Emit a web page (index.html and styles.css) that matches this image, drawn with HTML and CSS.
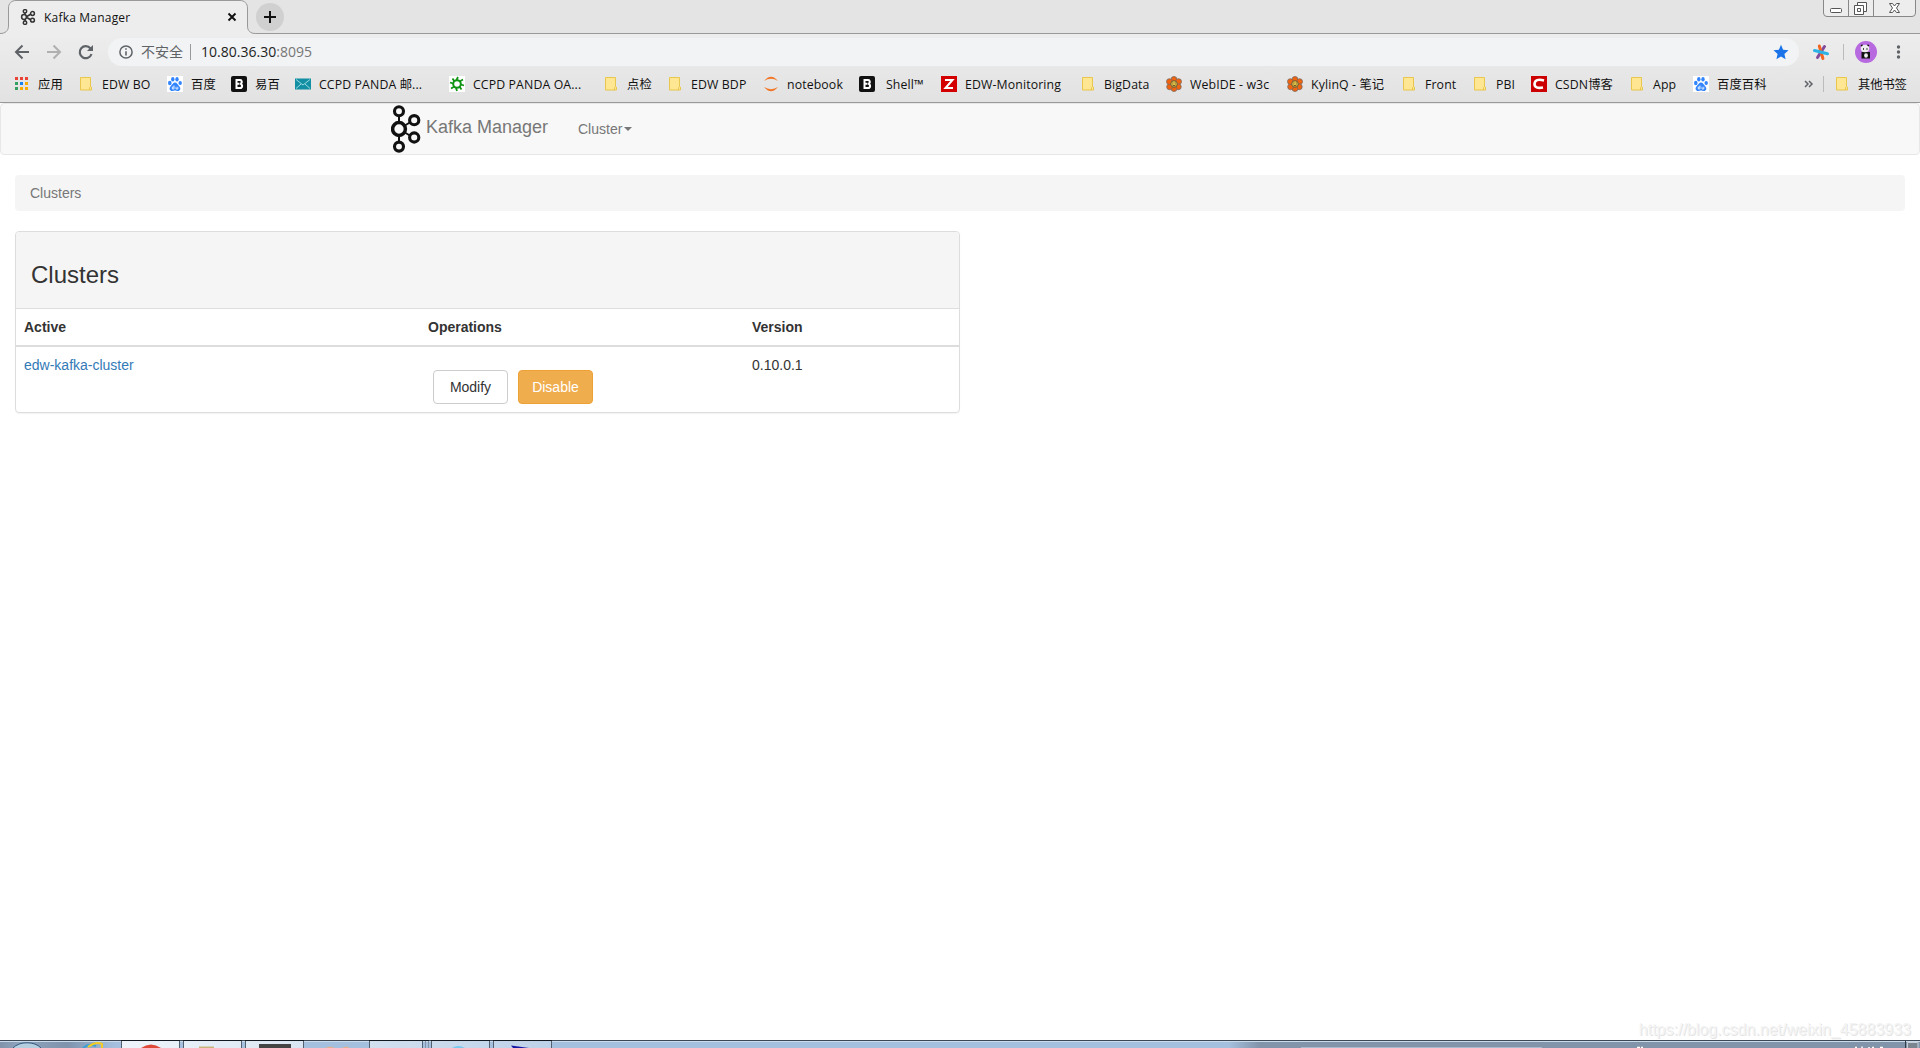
FILE: index.html
```html
<!DOCTYPE html>
<html lang="zh-CN">
<head>
<meta charset="utf-8">
<title>Kafka Manager</title>
<link rel="stylesheet" href="styles.css">
</head>
<body>
<svg class="defs" aria-hidden="true">
  <symbol id="kafka" viewBox="0 0 30 48"><g fill="none" stroke="currentColor"><path d="M8 11v26M8 24l15-9M8 24l15 9" stroke-width="2"/><g fill="#f8f8f8" stroke-width="3.1"><circle cx="8" cy="6.3" r="4.5"/><circle cx="8" cy="24" r="6.4" stroke-width="3.5"/><circle cx="8" cy="41.6" r="4.5"/><circle cx="23.2" cy="15.2" r="4.6"/><circle cx="23.2" cy="32.5" r="4.6"/></g></g></symbol>
  <symbol id="folder" viewBox="0 0 16 16"><path d="M2.500 1.500h10v9.200l1 .5v2.800h-11z" fill="#ffe692" stroke="#e9c64d"/><path d="M11.500 14v-2.500l1-1" fill="none" stroke="#e9c64d"/></symbol>
  <symbol id="baidu" viewBox="0 0 16 16"><path fill="#fff" d="M0 0h16v16H0z"/><g fill="#3385ff"><ellipse cx="2.800" cy="7" rx="1.800" ry="2.200"/><ellipse cx="5.800" cy="3.200" rx="1.700" ry="2.300"/><ellipse cx="10" cy="3.200" rx="1.700" ry="2.300"/><ellipse cx="13.200" cy="7" rx="1.700" ry="2.100"/><path d="M8 6.500c2 0 2.600 2 4 3.500 2.500 2.500 1 5-1 5-1.500 0-2-.5-3-.5s-1.500.5-3 .5c-2 0-3.600-2.500-1.200-5C5.500 8.500 6 6.500 8 6.500z"/></g><path d="M7 9.500v3.500H5.300v-2H7m2-.2v2.200h1.800v-2.200" fill="none" stroke="#fff" stroke-width=".8"/></symbol>
  <symbol id="boot" viewBox="0 0 16 16"><rect width="16" height="16" rx="2" fill="#111"/><path d="M5.500 4v8h3.300a2 2 0 0 0 .4-4.200A1.900 1.900 0 0 0 8.600 4zM5.500 7.800h3" fill="none" stroke="#fff" stroke-width="2"/></symbol>
  <symbol id="flower" viewBox="0 0 16 16"><g fill="#f26310" stroke="#7a6a60" stroke-width=".8"><circle cx="8" cy="3.400" r="2.900"/><circle cx="12.600" cy="5.600" r="2.900"/><circle cx="12.300" cy="10.800" r="2.900"/><circle cx="8" cy="12.600" r="2.900"/><circle cx="3.600" cy="10.800" r="2.900"/><circle cx="3.400" cy="5.600" r="2.900"/></g><circle cx="8" cy="8" r="3.300" fill="#e1c14a" stroke="#6d5a30"/><path d="M6.500 7h.8m1.600 0h.8M6.500 9l1.500 1 1.500-1" fill="none" stroke="#59461c"/></symbol>
</svg>

<header class="browser">
  <div class="tabstrip">
    <svg class="tab-shape" width="256" height="35" viewBox="0 0 256 35"><path d="M0 34V33.500C5 33.500 8.500 31 8.500 26V8C8.500 3.500 11.500.5 16 .5h224c4.500 0 7.500 3 7.500 7.500v18c0 5 3 7.500 8 7.500V35H0z" fill="#ededed"/><path d="M0 33.500C5 33.500 8.500 31 8.500 26V8C8.500 3.500 11.500.5 16 .5h224c4.500 0 7.500 3 7.500 7.500v18c0 5 3 7.500 8 7.500" fill="none" stroke="#999"/></svg>
    <div class="tab">
      <svg class="tab-icon" viewBox="0 0 16 16"><g fill="none" stroke="#333" stroke-width="1.500"><path d="M5 4v8M6 8l5-3M6 8l5 3"/><g fill="#ededed"><circle cx="5" cy="2.300" r="1.700"/><circle cx="4" cy="8" r="2.400"/><circle cx="5" cy="13.700" r="1.700"/><circle cx="12.500" cy="4.500" r="1.900"/><circle cx="12.500" cy="11.200" r="1.900"/></g></g></svg>
      <span class="tab-title">Kafka Manager</span>
      <svg class="tab-close" viewBox="0 0 10 10"><path d="M1.500 1.500l7 7m0-7l-7 7" stroke="#111" stroke-width="1.900"/></svg>
    </div>
    <span class="newtab"><svg width="28" height="28" viewBox="0 0 28 28"><path d="M14 8v12M8 14h12" stroke="#111" stroke-width="2"/></svg></span>
    <svg class="winctl" width="94" height="18" viewBox="0 0 94 18"><path d="M.5 0v13q0 3.500 3.500 3.500h85q3.500 0 3.500-3.500V0M25.500 0v16M50.500 0v16" fill="#ededed" stroke="#888"/><rect x="7.500" y="8.500" width="11" height="4" rx="1" fill="#fff" stroke="#555"/><path d="M34.500 5.500v-3h9v9h-3" fill="#fff" stroke="#555"/><path d="M31.500 5.500h9v9h-9zM34.500 8.500h3v3h-3z" fill="#fff" stroke="#555"/><path d="M66.500 3.500h3l2 2.500 2-2.500h3l-3 4.500 3 4.500h-3l-2-2.500-2 2.500h-3l3-4.500z" fill="#fff" stroke="#555"/></svg>
  </div>

  <div class="toolbar">
    <svg class="nav-icons" width="108" height="28" viewBox="0 0 108 28"><g fill="none" stroke-width="2"><path d="M29 14H16.500M22.500 7.500L16 14l6.500 6.500" stroke="#5f6368"/><path d="M47 14h12.500M53.500 7.500L60 14l-6.500 6.500" stroke="#b0b0b0"/><path d="M90.500 10.500A6 6 0 1 0 91.500 16" stroke="#5f6368" stroke-width="2.200"/></g><path d="M93 7v6h-6z" fill="#5f6368"/></svg>
    <div class="omnibox">
      <svg width="14" height="14" viewBox="0 0 14 14"><circle cx="7" cy="7" r="6.100" fill="none" stroke="#5f6368" stroke-width="1.500"/><path d="M7 6.200v4.300M7 3.300v1.500" stroke="#5f6368" stroke-width="1.600"/></svg>
      <span class="insecure">不安全</span>
      <span class="url"><b>10.80.36.30</b>:8095</span>
      <svg class="star" width="16" height="16" viewBox="0 0 16 16"><path d="M8 .8l2.100 5 5.400.5-4.100 3.600 1.200 5.300L8 12.400l-4.600 2.800 1.200-5.300L.5 6.300l5.400-.5z" fill="#1a73e8"/></svg>
    </div>
    <svg class="tools" width="113" height="28" viewBox="0 0 113 28"><g stroke-width="3" stroke-linecap="round"><path d="M17.500 8.500l-7 11" stroke="#824b9e"/><path d="M12.300 8l3.600 12.500" stroke="#f26422"/><path d="M7.500 12.500l13 3.300" stroke="#2bb2e6"/></g><path d="M36.500 6v16" stroke="#bbb"/><circle cx="59" cy="14" r="11" fill="#b76ae0"/><path d="M54.500 14h8.500v6.500h-8.500z" fill="#111"/><ellipse cx="58" cy="10.500" rx="4.300" ry="3.700" fill="#eee"/><ellipse cx="59" cy="17.500" rx="1.900" ry="2.300" fill="#eee"/><path d="M54 8l1.500-1.200M60.500 6.800L62 8M56 11h1m2.500 0h1" stroke="#111" stroke-width="1.400"/><g fill="#5f6368"><circle cx="91.500" cy="9" r="1.700"/><circle cx="91.500" cy="14" r="1.700"/><circle cx="91.500" cy="19" r="1.700"/></g></svg>
  </div>

  <nav class="bookmarks">
    <a><svg viewBox="0 0 16 16"><g transform="translate(1 1)"><path fill="#ea4335" d="M0 0h3v3H0zM5 0h3v3H5zM10 0h3v3h-3z"/><path fill="#34a060" d="M0 5h3v3H0zM0 10h3v3H0z"/><path fill="#1a82f0" d="M5 5h3v3H5z"/><path fill="#f9ab00" d="M10 5h3v3h-3zM5 10h3v3H5zM10 10h3v3h-3z"/></g></svg><span>应用</span></a>
    <a><svg><use href="#folder"/></svg><span>EDW BO</span></a>
    <a><svg><use href="#baidu"/></svg><span>百度</span></a>
    <a><svg><use href="#boot"/></svg><span>易百</span></a>
    <a><svg viewBox="0 0 16 16"><path d="M0 2.500h16v11H0z" fill="#138fa3"/><path d="M1 3.500l7 5.500 7-5.500M1 12.500l5-4.500m9 4.500L10 8" fill="none" stroke="#b8edf0" stroke-width=".8"/></svg><span>CCPD PANDA 邮...</span></a>
    <a><svg viewBox="0 0 16 16"><path fill="#fff" d="M0 0h16v16H0z"/><g fill="none" stroke="#119414"><circle cx="8" cy="8" r="3.800" stroke-width="2"/><path d="M9 1L7.500 4M7 12l1 3M1 6.500l3 1m8 1l3 1M3.500 2.500l2 3m5 5l2 3M2 12.500l3.500-2m5-5l3.500-2" stroke-width="1.800"/></g></svg><span>CCPD PANDA OA...</span></a>
    <a><svg><use href="#folder"/></svg><span>点检</span></a>
    <a><svg><use href="#folder"/></svg><span>EDW BDP</span></a>
    <a><svg viewBox="0 0 16 16"><path d="M1 5Q8-3.500 15 5 8 .7 1 5zM1 11q7 8.500 14 0-7 4.300-14 0z" fill="#f37726"/></svg><span>notebook</span></a>
    <a class="wide"><svg><use href="#boot"/></svg><span>Shell™</span></a>
    <a><svg viewBox="0 0 16 16"><path fill="#d40000" d="M0 0h16v16H0z"/><path d="M4 4h7.500L4.500 12H12" fill="none" stroke="#fff" stroke-width="2"/></svg><span>EDW-Monitoring</span></a>
    <a><svg><use href="#folder"/></svg><span>BigData</span></a>
    <a><svg><use href="#flower"/></svg><span>WebIDE - w3c</span></a>
    <a><svg><use href="#flower"/></svg><span>KylinQ - 笔记</span></a>
    <a><svg><use href="#folder"/></svg><span>Front</span></a>
    <a><svg><use href="#folder"/></svg><span>PBI</span></a>
    <a><svg viewBox="0 0 16 16"><path fill="#c00" d="M0 0h16v16H0z"/><path d="M13 4.500Q4 2 3.500 8q0 5 8.500 3.500" fill="none" stroke="#fff" stroke-width="2.600"/></svg><span>CSDN博客</span></a>
    <a><svg><use href="#folder"/></svg><span>App</span></a>
    <a><svg><use href="#baidu"/></svg><span>百度百科</span></a>
    <svg class="more" viewBox="0 0 10 10"><path d="M1 2l3 3-3 3m4-6l3 3-3 3" fill="none" stroke="#5f6368" stroke-width="1.500"/></svg>
    <a class="other"><svg><use href="#folder"/></svg><span>其他书签</span></a>
  </nav>
</header>

<main class="page">
  <nav class="navbar">
    <div class="container">
      <svg class="logo"><use href="#kafka"/></svg>
      <span class="brand">Kafka Manager</span>
      <a class="menu">Cluster<i class="caret"></i></a>
    </div>
  </nav>
  <div class="content">
    <div class="breadcrumb">Clusters</div>
    <section class="panel">
      <div class="panel-heading"><h3>Clusters</h3></div>
      <table>
        <thead><tr><th class="active">Active</th><th class="ops">Operations</th><th>Version</th></tr></thead>
        <tbody><tr><td><a class="link">edw-kafka-cluster</a></td><td><div class="buttons"><a class="btn">Modify</a><a class="btn warning">Disable</a></div></td><td>0.10.0.1</td></tr></tbody>
      </table>
    </section>
  </div>
  <div class="watermark">https://blog.csdn.net/weixin_45883933</div>
</main>

<footer class="taskbar">
  <svg width="1920" height="8" viewBox="0 0 1920 8">
    <defs>
      <linearGradient id="bar"><stop offset="0" stop-color="#8093aa"/><stop offset=".01" stop-color="#8fa4bd"/><stop offset=".035" stop-color="#7f93ad"/><stop offset=".06" stop-color="#a5c0de"/><stop offset=".64" stop-color="#a5c0de"/><stop offset=".656" stop-color="#8294aa"/><stop offset="1" stop-color="#8294aa"/></linearGradient>
      <linearGradient id="task"><stop offset="0" stop-color="#eef4fa"/><stop offset="1" stop-color="#bdd1e8"/></linearGradient>
    </defs>
    <path fill="url(#bar)" d="M0 0h1920v8H0z"/><path d="M0 .5h1920" stroke="#3d4854"/><path d="M0 1.500h1920" stroke="#c9dced"/>
    <path d="M13 8C19 1 35 1 41 8" fill="#b5cfe0" stroke="#31577d"/>
    <path d="M83 8q6-5 13-2" fill="none" stroke="#3ca0d8" stroke-width="2"/><path d="M88 7q8-6 14-3v4" fill="none" stroke="#f2cc23" stroke-width="2"/>
    <g fill="url(#task)" stroke="#52606f"><path d="M121.500 9V.5h58V9zM183.500 9V.5h58V9zM245.500 9V.5h58V9zM369.500 9V.5h53V9zM431.500 9V.5h58V9zM493.500 9V.5h58V9z"/></g>
    <path d="M121 .5h59m3 0h59m3 0h59m65 0h60m2 0h59m3 0h59" stroke="#111820"/>
    <path d="M425.500 1v7M428.500 1v7" stroke="#8494a6"/>
    <path d="M141 8q10-7 20 0z" fill="#df4938"/><path d="M199 6.500h15V8h-15z" fill="#c8b47b"/><path d="M259 8V4h32v4z" fill="#444"/><path d="M325 8l5-1.500L335 8zM342 8l4-1.500L350 8z" fill="#e5ae8d"/><path d="M452 8q6-4 13 0z" fill="#77c9ee"/><path d="M511 5.500l18 2.500h-16z" fill="#1717a5"/>
    <path d="M1301 7.500h241" stroke="#a8b9cb"/><path d="M1637 7.500h3m1 0h2M1855 7.500h2m5-1v1.500m7-1v1m3-.5h2m6 0h3" stroke="#fff" stroke-width="1.500"/>
    <path d="M1905.500 1v7" stroke="#303d4a"/><path d="M1907.500 9V2.500H1918V9" fill="#7b8590" stroke="#c5ced8"/>
  </svg>
</footer>
</body>
</html>
```
FILE: styles.css
```css
* { box-sizing: border-box; }
body {
  margin: 0;
  height: 1048px;
  display: flex;
  flex-direction: column;
  overflow: hidden;
  background: #fff;
  color: #333;
  font: 14px/20px "Liberation Sans", Arial, sans-serif;
}
svg { display: block; flex: none; }
.defs { position: absolute; width: 0; height: 0; }

/* Browser window */
.browser {
  height: 103px;
  flex: none;
  background: linear-gradient(#e4e4e4 0, #e4e4e4 33px, #ededed 34px, #e2e2e2 102px);
  border-bottom: 1px solid #999;
  color: #111;
  font-family: "Open Sans", "Noto Sans CJK SC", sans-serif;
}
.tabstrip {
  height: 34px;
  display: flex;
  position: relative;
  border-bottom: 1px solid #999;
}
.tab-shape { position: absolute; left: 0; top: 0; }
.tab {
  position: relative;
  width: 248px;
  height: 34px;
  padding: 0 11px 0 20px;
  display: flex;
  align-items: center;
}
.tab-icon { width: 16px; height: 16px; }
.tab-title { margin-left: 8px; padding-top: 2px; font-size: 12px; letter-spacing: .2px; }
.tab-close { width: 10px; height: 10px; margin-left: auto; }
.newtab {
  width: 28px;
  height: 28px;
  margin: 3px 0 0 8px;
  border-radius: 50%;
  background: #d0d0d0;
}
.winctl { margin: 0 3px 0 auto; }
.toolbar { height: 32px; display: flex; padding-top: 4px; }
.omnibox {
  height: 28px;
  flex: 1;
  display: flex;
  align-items: center;
  padding: 0 10px 0 11px;
  border-radius: 14px;
  background: #f1f3f4;
  font-size: 14px;
}
.insecure {
  width: 50px;
  height: 16px;
  margin-left: 8px;
  border-right: 1px solid #999;
  line-height: 15px;
  color: #5f6368;
  white-space: nowrap;
}
.url { margin-left: 10px; color: #777; letter-spacing: .02px; }
.url b { color: #222; font-weight: normal; }
.star { margin-left: auto; }
.tools { margin-left: 8px; }
.bookmarks {
  height: 36px;
  padding-left: 14px;
  display: grid;
  grid-template-columns: 64px 89px 64px 64px 154px 154px 64px 96px 96px 82px 139px 86px 121px 114px 71px 59px 98px 64px 111px 19px 97px;
  align-items: center;
  font-size: 12.300px;
  letter-spacing: .12px;
}
.bookmarks a { display: flex; gap: 8px; align-items: center; white-space: nowrap; }
.bookmarks a svg { width: 16px; height: 16px; }
.bookmarks a span { padding-top: 2px; }
.bookmarks .wide { gap: 11px; }
.bookmarks .more { width: 10px; height: 10px; }
.bookmarks .other { height: 16px; padding-left: 10px; border-left: 1px solid #bbb; letter-spacing: -.1px; }

/* Page */
.page { flex: 1; position: relative; }
.navbar {
  height: 52px;
  background: #f8f8f8;
  border: 1px solid #e7e7e7;
  border-radius: 4px;
}
.container { width: 1170px; height: 50px; margin: 0 auto; padding-left: 16px; display: flex; color: #777; }
.logo { width: 30px; height: 48px; margin-top: 1px; color: #111; }
.brand { margin: 13px 0 0 5px; width: 122px; font-size: 18px; white-space: nowrap; }
.menu { display: flex; align-items: center; height: 20px; margin: 15px 0 0 30px; }
.caret { border: 4px solid transparent; border-top-color: #777; border-bottom: 0; margin-left: 2px; }
.content { padding: 20px 15px; }
.breadcrumb { height: 36px; padding: 8px 15px; border-radius: 4px; background: #f5f5f5; color: #777; }
.panel {
  width: 945px;
  height: 182px;
  margin-top: 20px;
  border: 1px solid #ddd;
  border-radius: 4px;
  box-shadow: 0 1px 1px rgba(0, 0, 0, .05);
}
.panel-heading { height: 77px; padding: 30px 15px 0; background: #f5f5f5; border-bottom: 1px solid #ddd; border-radius: 3px 3px 0 0; }
h3 { margin: 0; font-size: 24px; line-height: 26px; font-weight: 500; }
table { width: 100%; border-collapse: collapse; table-layout: fixed; }
th, td { padding: 8px; text-align: left; vertical-align: top; }
th { border-bottom: 2px solid #ddd; }
.active { width: 404px; }
.ops { width: 324px; }
.link { color: #337ab7; }
.buttons { display: flex; gap: 10px; padding: 15px 5px 0; }
.btn { width: 75px; height: 34px; border: 1px solid #ccc; border-radius: 4px; text-align: center; line-height: 32px; }
.warning { color: #fff; background: #f0ad4e; border-color: #eea236; }
.watermark { position: absolute; right: 9px; bottom: 0; font-size: 16px; color: #f4f4f4; text-shadow: 1px 1px 0 #e4e4e4; }
.taskbar { height: 8px; flex: none; }
```
